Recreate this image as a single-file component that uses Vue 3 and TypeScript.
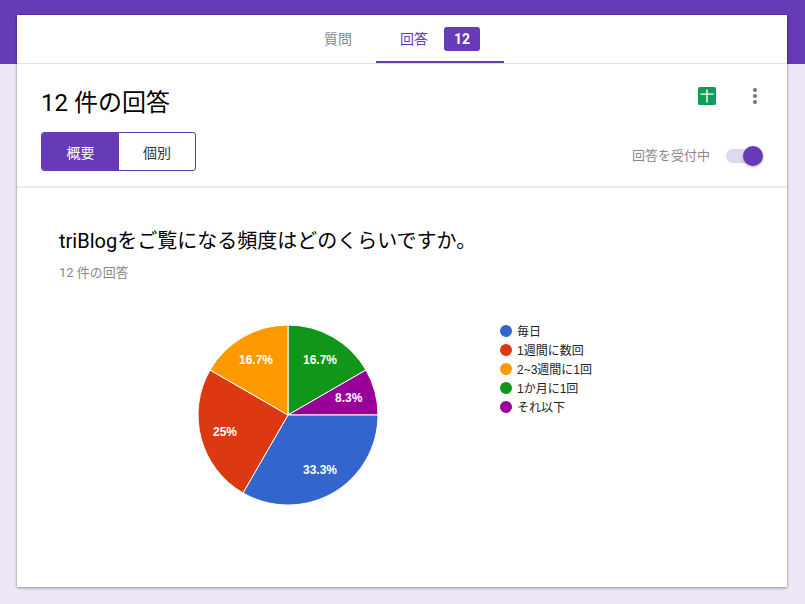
<script setup lang="ts">
interface Slice { d: string; color: string }
interface LegendItem { label: string; color: string }
interface PieLabel { text: string; left: number; top: number }

const slices: Slice[] = [
  { d: 'M90 90 L90 0 A90 90 0 0 1 167.94 45 Z', color: '#109618' },
  { d: 'M90 90 L167.94 45 A90 90 0 0 1 180 90 Z', color: '#990099' },
  { d: 'M90 90 L180 90 A90 90 0 0 1 45 167.94 Z', color: '#3366cc' },
  { d: 'M90 90 L45 167.94 A90 90 0 0 1 12.06 45 Z', color: '#dc3912' },
  { d: 'M90 90 L12.06 45 A90 90 0 0 1 90 0 Z', color: '#ff9900' },
]
const labels: PieLabel[] = [
  { text: '16.7%', left: 105, top: 28 },
  { text: '16.7%', left: 41, top: 28 },
  { text: '8.3%', left: 137, top: 66 },
  { text: '33.3%', left: 105, top: 138 },
  { text: '25%', left: 15, top: 100 },
]
const legend: LegendItem[] = [
  { label: '毎日', color: '#3366cc' },
  { label: '1週間に数回', color: '#dc3912' },
  { label: '2~3週間に1回', color: '#ff9900' },
  { label: '1か月に1回', color: '#109618' },
  { label: 'それ以下', color: '#990099' },
]
</script>

<template>
  <div class="page">
    <main class="card">
      <nav class="tabs">
        <div class="tab">質問</div>
        <div class="tab active">
          <span>回答</span>
          <span class="badge">12</span>
        </div>
      </nav>

      <header class="head">
        <div class="head-left">
          <h1 class="title">12 件の回答</h1>
          <div class="segmented">
            <div class="seg on">概要</div>
            <div class="seg">個別</div>
          </div>
        </div>
        <div class="head-right">
          <div class="actions">
            <svg class="sheet" width="18" height="18" viewBox="0 0 18 18">
              <rect width="18" height="18" rx="1.5" fill="#0f9d58" />
              <path d="M2.5 6.4h13v1.4H9.7v7.7H8.3V7.8H2.5z M8.3 2.5h1.4v3.9H8.3z" fill="#fff" />
            </svg>
            <div class="dots"><i></i><i></i><i></i></div>
          </div>
          <div class="accepting">
            <span>回答を受付中</span>
            <div class="switch"><div class="knob"></div></div>
          </div>
        </div>
      </header>

      <section class="body">
        <h2 class="question">triBlogをご覧になる頻度はどのくらいですか。</h2>
        <p class="count">12 件の回答</p>
        <div class="chart">
          <div class="pie">
            <svg width="180" height="180" viewBox="0 0 180 180">
              <path
                v-for="s in slices"
                :key="s.color"
                :d="s.d"
                :fill="s.color"
                stroke="#fff"
                stroke-width="1"
                stroke-linejoin="round"
              />
            </svg>
            <span
              v-for="l in labels"
              :key="l.text + l.left"
              class="pie-label"
              :style="{ left: l.left + 'px', top: l.top + 'px' }"
            >{{ l.text }}</span>
          </div>
          <ul class="legend">
            <li v-for="i in legend" :key="i.label">
              <span class="swatch" :style="{ background: i.color }"></span>{{ i.label }}
            </li>
          </ul>
        </div>
      </section>
    </main>
  </div>
</template>

<style>
html, body { margin: 0; padding: 0; overflow: hidden; }
body { background: linear-gradient(#673ab7 64px, #ede7f6 64px); }
</style>

<style scoped>
.page {
  box-sizing: border-box;
  height: 604px;
  padding: 15px 18px 17px 17px;
  font-family: Roboto, "Noto Sans CJK JP", sans-serif;
}
.card {
  height: 572px;
  background: #fff;
  box-shadow: 0 1px 3px rgba(0, 0, 0, 0.35), 0 0 2px rgba(0, 0, 0, 0.15);
}
.tabs {
  box-sizing: border-box;
  height: 49px;
  display: flex;
  justify-content: center;
  border-bottom: 1px solid #e0e0e0;
}
.tab {
  display: flex;
  align-items: center;
  gap: 16px;
  box-sizing: border-box;
  height: 48px;
  padding: 0 24px 2px;
  font-size: 14px;
  font-weight: 400;
  color: #888;
}
.tab.active {
  padding-bottom: 0;
  color: #673ab7;
  border-bottom: 2px solid #673ab7;
}
.badge {
  width: 36px;
  height: 24px;
  margin-top: 2px;
  border-radius: 3px;
  background: #673ab7;
  color: #fff;
  font-weight: 700;
  font-size: 14px;
  line-height: 24px;
  text-align: center;
}
.head {
  box-sizing: border-box;
  height: 124px;
  display: flex;
  justify-content: space-between;
  padding: 0 24px;
  border-bottom: 2px solid #ececec;
}
.title {
  margin: 22px 0 0;
  font-size: 24px;
  line-height: 34px;
  font-weight: 400;
  color: #000;
}
.segmented {
  display: flex;
  box-sizing: border-box;
  width: 155px;
  height: 39px;
  margin-top: 12px;
  border: 1px solid #673ab7;
  border-radius: 3px;
  overflow: hidden;
}
.seg {
  flex: 1;
  display: flex;
  align-items: center;
  justify-content: center;
  font-size: 14px;
  font-weight: 400;
  color: #333;
}
.seg.on {
  flex: 0 0 77px;
  background: #673ab7;
  color: #fff;
}
.head-right {
  display: flex;
  flex-direction: column;
  align-items: flex-end;
}
.actions {
  display: flex;
  align-items: center;
  gap: 37px;
  height: 18px;
  margin-top: 23px;
  padding-right: 6px;
}
.sheet { display: block; }
.dots {
  display: flex;
  flex-direction: column;
  gap: 2px;
  width: 4px;
}
.dots i {
  display: block;
  width: 4px;
  height: 4px;
  border-radius: 50%;
  background: #757575;
}
.accepting {
  display: flex;
  align-items: center;
  gap: 16px;
  margin-top: 41px;
  margin-right: 4px;
  font-size: 13px;
  line-height: 20px;
  color: #888;
}
.switch {
  position: relative;
  width: 34px;
  height: 14px;
  margin-right: -1px;
  border-radius: 7px;
  background: #e0d8f0;
}
.knob {
  position: absolute;
  right: -3px;
  top: -3px;
  width: 20px;
  height: 20px;
  border-radius: 50%;
  background: #673ab7;
  box-shadow: 0 1px 3px rgba(0, 0, 0, 0.3);
}
.body { padding: 0 42px; }
.question {
  margin: 38px 0 0;
  font-size: 20px;
  line-height: 30px;
  font-weight: 400;
  color: #000;
}
.count {
  margin: 7px 0 0;
  font-size: 13px;
  line-height: 20px;
  color: #888;
}
.chart {
  display: flex;
  align-items: flex-start;
  margin-top: 42px;
  padding-left: 139px;
}
.pie {
  position: relative;
  width: 180px;
  height: 180px;
}
.pie svg { display: block; }
.pie-label {
  position: absolute;
  font-family: "Liberation Sans", Arial, sans-serif;
  font-size: 12px;
  font-weight: 700;
  line-height: 14px;
  color: #fff;
}
.legend {
  list-style: none;
  margin: -4px 0 0 122px;
  padding: 0;
  font-family: "Liberation Sans", "Noto Sans CJK JP", sans-serif;
  font-size: 12px;
  color: #222;
}
.legend li {
  display: flex;
  align-items: center;
  height: 19px;
  white-space: nowrap;
}
.swatch {
  width: 12px;
  height: 12px;
  margin-right: 5px;
  border-radius: 50%;
}
</style>
